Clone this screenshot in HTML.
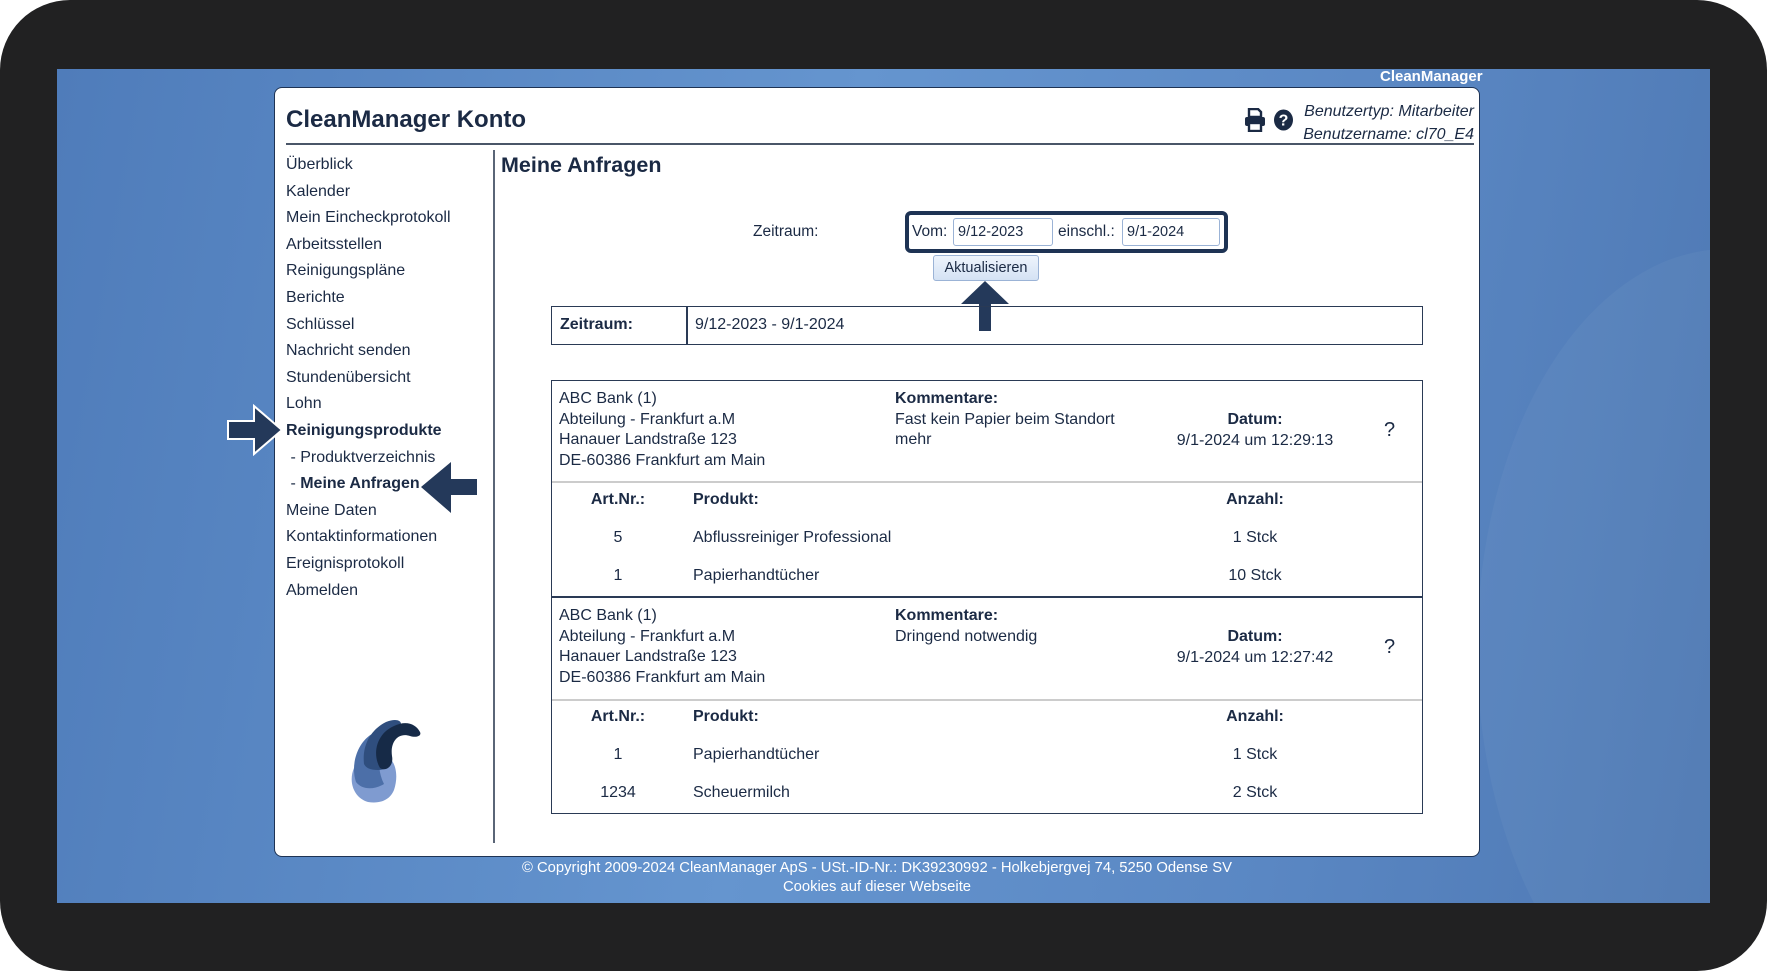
<!DOCTYPE html>
<html><head><meta charset="utf-8"><style>
*{margin:0;padding:0;box-sizing:border-box}
body{width:1767px;height:971px;background:#fff;font-family:"Liberation Sans",sans-serif;color:#1b2a44;position:relative;overflow:hidden}
.frame{position:absolute;left:0;top:0;width:1767px;height:971px;background:#212122;border-radius:70px}
.blue{position:absolute;left:57px;top:69px;width:1653px;height:834px;background:linear-gradient(100deg,#4f7cba 0%,#6595cf 45%,#5a87c3 75%,#4e78b3 100%);overflow:hidden}
.blue:after{content:"";position:absolute;left:1420px;top:180px;width:500px;height:800px;border-radius:50%;background:rgba(255,255,255,0.04)}
.a{position:absolute;white-space:nowrap}
.panel{position:absolute;left:274px;top:87px;width:1206px;height:770px;background:#fff;border:1px solid #1e3354;border-radius:8px}
.nav{font-size:16px}
.t{font-size:16px}
b{font-weight:bold}
.box{position:absolute;border:1.5px solid #2a3a55}
.inp{position:absolute;background:#fff;border:1px solid #9bb3d6;border-radius:3px;font-size:14.5px;padding:5px 4px}
</style></head><body>
<div class="frame"></div>
<div class="blue"></div>
<div class="a" style="left:1380px;top:68px;width:100px;text-align:right;color:#fff;font-weight:bold;font-size:15px">CleanManager</div>
<div class="panel"></div>
<div class="a" style="left:286px;top:106px;font-size:24px;font-weight:bold">CleanManager Konto</div>
<div style="position:absolute;left:286px;top:143px;width:1188px;height:2px;background:#4a5668"></div>
<svg class="a" style="left:1244px;top:108px" width="22" height="24" viewBox="0 0 22 24"><path d="M5 1h9l3 3v5H5z" fill="none" stroke="#1b2a44" stroke-width="2.4"/><rect x="1" y="9" width="20" height="9" rx="2" fill="#1b2a44"/><rect x="5" y="15" width="12" height="8" fill="#fff" stroke="#1b2a44" stroke-width="2.4"/></svg>
<svg class="a" style="left:1273px;top:109px" width="21" height="22" viewBox="0 0 21 22"><ellipse cx="10.5" cy="11" rx="9.5" ry="10.5" fill="#1b2a44"/><text x="10.5" y="16.5" font-family="Liberation Sans" font-weight="bold" font-size="16" fill="#fff" text-anchor="middle">?</text></svg>
<div class="a" style="right:293px;top:100px;font-size:16px;font-style:italic;text-align:right;line-height:23px">Benutzertyp: Mitarbeiter<br>Benutzername: cl70_E4</div>
<div class="a nav" style="left:286px;top:152px;line-height:26.6px">Überblick<br>Kalender<br>Mein Eincheckprotokoll<br>Arbeitsstellen<br>Reinigungspläne<br>Berichte<br>Schlüssel<br>Nachricht senden<br>Stundenübersicht<br>Lohn<br><b>Reinigungsprodukte</b><br>&nbsp;- Produktverzeichnis<br>&nbsp;- <b>Meine Anfragen</b><br>Meine Daten<br>Kontaktinformationen<br>Ereignisprotokoll<br>Abmelden</div>
<div style="position:absolute;left:493px;top:150px;width:2px;height:693px;background:#5a6577"></div>
<svg class="a" style="left:226px;top:404px" width="60" height="52" viewBox="0 0 60 52"><path d="M2 17h26V2l28 24-28 24V35H2z" fill="#24395a" stroke="#fff" stroke-width="2"/></svg>
<svg class="a" style="left:419px;top:460px" width="60" height="55" viewBox="0 0 60 55"><path d="M58 19H32V2L2 27l30 26V35h26z" fill="#24395a"/></svg>
<svg class="a" style="left:960px;top:280px" width="50" height="52" viewBox="0 0 50 52"><path d="M25 1L1 24h18v27h12V24h18z" fill="#24395a"/></svg>
<svg class="a" style="left:338px;top:712px" width="90" height="100" viewBox="0 0 90 100"><path d="M30 90c-14-4-20-20-14-34 4-10 10-16 24-16 16 2 22 20 16 38-4 10-14 14-26 12z" fill="#7f9bd0"/><path d="M18 70c-6-18 2-40 16-48 8-4 14 2 10 14-4 12-4 24 2 36-10 6-22 6-28-2z" fill="#4c6fa8"/><path d="M26 52c-2-18 6-34 22-42 10-4 18-2 14 6-10 6-14 16-10 28 4 8-2 14-12 14-8 0-12-2-14-6z" fill="#2f4e7e"/><path d="M42 56c-8-14-4-34 14-42 12-6 22-2 26 6 2 4-4 6-10 4-12-4-20 6-18 20 2 10 -6 16-12 12z" fill="#162a47"/></svg>
<div class="a" style="left:501px;top:153px;font-size:21.5px;font-weight:bold">Meine Anfragen</div>
<div class="a t" style="left:753px;top:223px;font-size:15.5px">Zeitraum:</div>
<div style="position:absolute;left:905px;top:211px;width:323px;height:42px;border:4px solid #1e3354;border-radius:6px"></div>
<div class="a" style="left:912px;top:223px;font-size:15.5px">Vom:</div>
<div class="inp" style="left:953px;top:218px;width:100px;height:28px">9/12-2023</div>
<div class="a" style="left:1058px;top:223px;font-size:15.5px">einschl.:</div>
<div class="inp" style="left:1122px;top:218px;width:98px;height:28px">9/1-2024</div>
<div class="a" style="left:933px;top:255px;width:106px;height:26px;border:1px solid #9bb3d6;border-radius:3px;background:linear-gradient(#eef4fc,#d4e2f4);font-size:14.5px;text-align:center;line-height:24px">Aktualisieren</div>
<div class="box" style="left:551px;top:306px;width:872px;height:39px"></div>
<div style="position:absolute;left:686px;top:306px;width:1.5px;height:39px;background:#2a3a55"></div>
<div class="a t" style="left:560px;top:316px;font-weight:bold">Zeitraum:</div>
<div class="a t" style="left:695px;top:316px">9/12-2023 - 9/1-2024</div>
<div class="box" style="left:551px;top:380px;width:872px;height:434px"></div>
<div style="position:absolute;left:552px;top:481px;width:870px;height:1.5px;background:#ccc"></div>
<div style="position:absolute;left:552px;top:596px;width:870px;height:1.5px;background:#2a3a55"></div>
<div style="position:absolute;left:552px;top:699px;width:870px;height:1.5px;background:#ccc"></div>
<div class="a t" style="left:559px;top:389px;line-height:20.7px">ABC Bank (1)<br>Abteilung - Frankfurt a.M<br>Hanauer Landstraße 123<br>DE-60386 Frankfurt am Main</div>
<div class="a t" style="left:895px;top:389px;line-height:20.7px"><b>Kommentare:</b><br>Fast kein Papier beim Standort<br>mehr</div>
<div class="a t" style="left:1155px;width:200px;text-align:center;top:410px;line-height:20.7px"><b>Datum:</b><br>9/1-2024 um 12:29:13</div>
<div class="a" style="left:1384px;top:419px;font-size:20px">?</div>
<div class="a t" style="left:568px;width:100px;text-align:center;top:491px;font-weight:bold">Art.Nr.:</div>
<div class="a t" style="left:693px;top:491px;font-weight:bold">Produkt:</div>
<div class="a t" style="left:1205px;width:100px;text-align:center;top:491px;font-weight:bold">Anzahl:</div>
<div class="a t" style="left:568px;width:100px;text-align:center;top:529px">5</div>
<div class="a t" style="left:693px;top:529px">Abflussreiniger Professional</div>
<div class="a t" style="left:1205px;width:100px;text-align:center;top:529px">1 Stck</div>
<div class="a t" style="left:568px;width:100px;text-align:center;top:567px">1</div>
<div class="a t" style="left:693px;top:567px">Papierhandtücher</div>
<div class="a t" style="left:1205px;width:100px;text-align:center;top:567px">10 Stck</div>
<div class="a t" style="left:559px;top:606px;line-height:20.7px">ABC Bank (1)<br>Abteilung - Frankfurt a.M<br>Hanauer Landstraße 123<br>DE-60386 Frankfurt am Main</div>
<div class="a t" style="left:895px;top:606px;line-height:20.7px"><b>Kommentare:</b><br>Dringend notwendig</div>
<div class="a t" style="left:1155px;width:200px;text-align:center;top:627px;line-height:20.7px"><b>Datum:</b><br>9/1-2024 um 12:27:42</div>
<div class="a" style="left:1384px;top:636px;font-size:20px">?</div>
<div class="a t" style="left:568px;width:100px;text-align:center;top:708px;font-weight:bold">Art.Nr.:</div>
<div class="a t" style="left:693px;top:708px;font-weight:bold">Produkt:</div>
<div class="a t" style="left:1205px;width:100px;text-align:center;top:708px;font-weight:bold">Anzahl:</div>
<div class="a t" style="left:568px;width:100px;text-align:center;top:746px">1</div>
<div class="a t" style="left:693px;top:746px">Papierhandtücher</div>
<div class="a t" style="left:1205px;width:100px;text-align:center;top:746px">1 Stck</div>
<div class="a t" style="left:568px;width:100px;text-align:center;top:784px">1234</div>
<div class="a t" style="left:693px;top:784px">Scheuermilch</div>
<div class="a t" style="left:1205px;width:100px;text-align:center;top:784px">2 Stck</div>
<div class="a" style="left:377px;width:1000px;text-align:center;top:859px;color:#fff;font-size:14.8px;line-height:19px">© Copyright 2009-2024 CleanManager ApS - USt.-ID-Nr.: DK39230992 - Holkebjergvej 74, 5250 Odense SV<br>Cookies auf dieser Webseite</div>
</body></html>
